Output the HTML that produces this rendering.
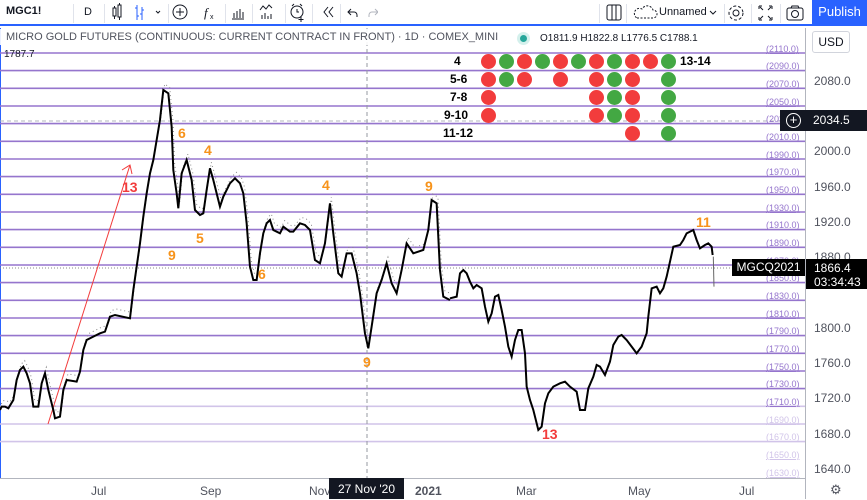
<!DOCTYPE html>
<html><head><meta charset="utf-8"><style>
*{margin:0;padding:0;box-sizing:border-box}
body{width:867px;height:499px;overflow:hidden;background:#fff;font-family:"Liberation Sans",sans-serif;position:relative;color:#131722}
.tb{position:absolute;left:0;top:0;width:867px;height:26px;background:#fff;border-bottom:2px solid #2962ff}
.t{position:absolute;font-size:12px;color:#131722}
.sep{position:absolute;top:4px;width:1px;height:19px;background:#e0e3eb}
.pub{position:absolute;left:812px;top:0;width:55px;height:26px;background:#2962ff;color:#fff;font-size:13px;line-height:24px;text-align:center}
.pa{position:absolute;font-size:12px;color:#50535e;left:814px}
.lab{position:absolute;font-size:9px;color:#9575cd;left:766px;text-decoration:underline}
.lt{color:#d1c4e9}
.on{position:absolute;font-weight:bold;font-size:14px;color:#f7931a}
.b{position:absolute;font-weight:bold;font-size:12px;color:#000}
.d{position:absolute;width:15px;height:15px;border-radius:50%}
.r{background:#f23c3c}.g{background:#43a843}
</style></head><body>
<div class="tb">
<div class="t" style="left:6px;top:5px;font-weight:bold;font-size:11px">MGC1!</div>
<div class="sep" style="left:73px"></div>
<div class="t" style="left:84px;top:6px;font-size:11px">D</div>
<div class="sep" style="left:104px"></div>
<svg style="position:absolute;left:108px;top:2px" width="270" height="22" fill="none" stroke="#131722" stroke-width="1">
<rect x="5" y="6" width="3" height="8"/><rect x="10" y="3" width="3" height="12"/><path d="M6.5 4v2M6.5 14v3M11.5 1v2M11.5 15v3"/>
<path d="M29 3v15M34 5v13M27 6h2M29 14h2M34 8h2M32 12h2" stroke="#2962ff"/>
<path d="M48 9l2 2 2-2"/>
<circle cx="72" cy="10" r="7"/><path d="M72 6v8M68 10h8"/>
<text x="96" y="15" font-size="13" font-style="italic" fill="#131722" stroke="none" font-family="Liberation Serif">f</text><text x="102" y="17" font-size="7" fill="#131722" stroke="none">x</text>
<path d="M124 17h12M126 16v-5M129 16v-7M132 16v-9M135 16v-6"/>
<path d="M152 8l3-4 3 3 3-4 3 3M154 17v-4M157 17v-6M160 17v-3M163 17v-5"/>
<circle cx="189" cy="10" r="6"/><path d="M189 7v3h2M184 4l2-2M194 4l-2-2M193 15v5M190.5 17.5h5"/>
<path d="M220 5l-4 5 4 5M225 5l-4 5 4 5"/>
<path d="M243 7l-3 3 3 3M240 10h6a3 3 0 0 1 3 3v2"/>
<path d="M267 7l3 3-3 3M270 10h-6a3 3 0 0 0-3 3v2" stroke="#b2b5be"/>
</svg>
<div class="sep" style="left:168px"></div><div class="sep" style="left:225px"></div><div class="sep" style="left:252px"></div><div class="sep" style="left:285px"></div><div class="sep" style="left:312px"></div><div class="sep" style="left:340px"></div>
<div class="sep" style="left:599px"></div><div class="sep" style="left:626px"></div><div class="sep" style="left:724px"></div><div class="sep" style="left:751px"></div><div class="sep" style="left:780px"></div>
<svg style="position:absolute;left:600px;top:2px" width="210" height="22" fill="none" stroke="#131722" stroke-width="1">
<rect x="7" y="3" width="14" height="15" rx="2"/><path d="M12 3v15M16 3v15"/>
<path d="M37 16h16a4 4 0 0 0 0-8 6 6 0 0 0-11-1 4 4 0 0 0-5 9z" stroke-dasharray="2 1.5"/>
<path d="M110 9l3 3 3-3"/>
<circle cx="136" cy="11" r="3"/><circle cx="136" cy="11" r="7" stroke-dasharray="3 2"/>
<path d="M159 4h3M159 4v3M172 4h-3M172 4v3M159 18h3M159 18v-3M172 18h-3M172 18v-3M160 5l3 3M171 5l-3 3M160 17l3-3M171 17l-3-3"/>
<rect x="187" y="6" width="16" height="12" rx="2"/><circle cx="195" cy="12" r="3.5"/><path d="M191 6l1-2h6l1 2"/>
</svg>
<div class="t" style="left:659px;top:6px;font-size:11px">Unnamed</div>
<div class="pub">Publish</div>
</div>
<div style="position:absolute;left:0;top:28px;width:1px;height:450px;background:#2962ff"></div>
<div style="position:absolute;left:805px;top:28px;width:1px;height:471px;background:#b2b5be"></div>
<div style="position:absolute;left:0;top:478px;width:805px;height:1px;background:#b2b5be"></div>
<svg style="position:absolute;left:0;top:28px" width="805" height="450">
<g stroke-width="1.6">
<line x1="0" x2="805" y1="25" y2="25" stroke="#9575cd"/><line x1="0" x2="805" y1="42.6" y2="42.6" stroke="#9575cd"/><line x1="0" x2="805" y1="60.3" y2="60.3" stroke="#9575cd"/><line x1="0" x2="805" y1="78" y2="78" stroke="#9575cd"/><line x1="0" x2="805" y1="95.6" y2="95.6" stroke="#9575cd"/><line x1="0" x2="805" y1="113.3" y2="113.3" stroke="#9575cd"/><line x1="0" x2="805" y1="131" y2="131" stroke="#9575cd"/><line x1="0" x2="805" y1="148.6" y2="148.6" stroke="#9575cd"/><line x1="0" x2="805" y1="166.3" y2="166.3" stroke="#9575cd"/><line x1="0" x2="805" y1="184" y2="184" stroke="#9575cd"/><line x1="0" x2="805" y1="201.6" y2="201.6" stroke="#9575cd"/><line x1="0" x2="805" y1="219.3" y2="219.3" stroke="#9575cd"/><line x1="0" x2="805" y1="237" y2="237" stroke="#9575cd"/><line x1="0" x2="805" y1="254.6" y2="254.6" stroke="#9575cd"/><line x1="0" x2="805" y1="272.3" y2="272.3" stroke="#9575cd"/><line x1="0" x2="805" y1="290" y2="290" stroke="#9575cd"/><line x1="0" x2="805" y1="307.6" y2="307.6" stroke="#9575cd"/><line x1="0" x2="805" y1="325.3" y2="325.3" stroke="#9575cd"/><line x1="0" x2="805" y1="343" y2="343" stroke="#9575cd"/><line x1="0" x2="805" y1="360.6" y2="360.6" stroke="#9575cd"/><line x1="0" x2="805" y1="378.3" y2="378.3" stroke="#d1c4e9"/><line x1="0" x2="805" y1="396" y2="396" stroke="#d1c4e9"/><line x1="0" x2="805" y1="413.6" y2="413.6" stroke="#d1c4e9"/>
</g>
<line x1="367" x2="367" y1="0" y2="450" stroke="#9598a1" stroke-dasharray="4 3"/>
<line x1="0" x2="805" y1="93" y2="93" stroke="#b2b5be" stroke-dasharray="4 3"/>
<line x1="0" x2="730" y1="240" y2="240" stroke="#888" stroke-dasharray="1 2"/>
<line x1="48" y1="396" x2="130" y2="137" stroke="#f23c3c"/>
<path d="M122 142l8-5 2 9" stroke="#f23c3c" fill="none"/>
<g transform="translate(0,32) scale(0.3333)" fill="none" stroke-linejoin="miter">
<path d="M0 1050L5 1040L15 1040L25 1045L40 1020L50 960L60 930L70 920L80 940L90 970L100 1040L115 1040L125 970L135 940L145 990L160 1050L165 1075L180 1070L190 990L200 960L230 965L240 935L250 870L260 840L280 830L300 820L315 815L330 770L345 765L390 775L400 690L410 620L420 550L430 470L440 400L450 340L460 300L470 240L480 180L490 90L505 100L515 200L520 330L530 400L535 445L545 340L560 300L575 360L585 450L600 465L610 460L620 390L630 325L640 360L650 400L660 440L670 410L690 370L705 355L720 370L730 400L740 490L750 620L760 660L770 660L780 580L790 520L800 490L810 480L820 510L840 520L850 500L870 515L880 515L900 490L915 495L930 510L945 600L960 610L975 550L990 430L1000 520L1015 640L1025 650L1040 580L1055 580L1070 640L1080 700L1095 820L1105 865L1115 800L1130 700L1145 660L1160 610L1175 670L1190 700L1205 630L1220 550L1240 580L1270 570L1285 510L1295 420L1310 430L1320 630L1330 710L1350 720" stroke="#888" stroke-width="3" stroke-dasharray="3 9" transform="translate(4,-18)"/>
<path d="M0 1050L5 1040L15 1040L25 1045L40 1020L50 960L60 930L70 920L80 940L90 970L100 1040L115 1040L125 970L135 940L145 990L160 1050L165 1075L180 1070L190 990L200 960L230 965L240 935L250 870L260 840L280 830L300 820L315 815L330 770L345 765L390 775L400 690L410 620L420 550L430 470L440 400L450 340L460 300L470 240L480 180L490 90L505 100L515 200L520 330L530 400L535 445L545 340L560 300L575 360L585 450L600 465L610 460L620 390L630 325L640 360L650 400L660 440L670 410L690 370L705 355L720 370L730 400L740 490L750 620L760 660L770 660L780 580L790 520L800 490L810 480L820 510L840 520L850 500L870 515L880 515L900 490L915 495L930 510L945 600L960 610L975 550L990 430L1000 520L1015 640L1025 650L1040 580L1055 580L1070 640L1080 700L1095 820L1105 865L1115 800L1130 700L1145 660L1160 610L1175 670L1190 700L1205 630L1220 550L1240 580L1270 570L1285 510L1295 420L1310 430L1320 630L1330 710L1350 720" stroke="#000" stroke-width="6"/>
</g>
<g transform="translate(440,172) scale(0.3333)" fill="none" stroke="#000" stroke-width="6">
<path d="M30 295L50 290L60 220L70 210L80 220L90 245L100 265L110 255L125 265L135 320L145 365L155 340L165 290L175 285L185 330L195 380L205 440L215 470L225 420L235 390L245 390L255 460L260 560L270 600L280 630L295 690L305 680L315 610L325 580L340 560L360 550L375 545L390 560L410 575L420 630L435 630L445 565L460 530L470 495L480 500L495 525L510 485L520 435L535 410L545 405L560 420L575 440L590 460L605 440L620 400L625 350L635 265L650 260L660 280L670 265L680 230L690 185L700 140L720 135L730 120L740 100L760 90L770 120L780 145L795 135L805 130L815 140L818 165"/>
<path d="M820 170L822 260" stroke="#666" stroke-width="3"/>
</g>
</svg>
<div class="lab" style="top:44px">(2110.0)</div><div class="lab" style="top:61px">(2090.0)</div><div class="lab" style="top:79px">(2070.0)</div><div class="lab" style="top:97px">(2050.0)</div><div class="lab" style="top:114px">(203</div><div class="lab" style="top:132px">(2010.0)</div><div class="lab" style="top:150px">(1990.0)</div><div class="lab" style="top:167px">(1970.0)</div><div class="lab" style="top:185px">(1950.0)</div><div class="lab" style="top:203px">(1930.0)</div><div class="lab" style="top:220px">(1910.0)</div><div class="lab" style="top:238px">(1890.0)</div><div class="lab" style="top:256px">(1870.0)</div><div class="lab" style="top:273px">(1850.0)</div><div class="lab" style="top:291px">(1830.0)</div><div class="lab" style="top:309px">(1810.0)</div><div class="lab" style="top:326px">(1790.0)</div><div class="lab" style="top:344px">(1770.0)</div><div class="lab" style="top:362px">(1750.0)</div><div class="lab" style="top:379px">(1730.0)</div><div class="lab" style="top:397px">(1710.0)</div><div class="lab lt" style="top:415px">(1690.0)</div><div class="lab lt" style="top:432px">(1670.0)</div><div class="lab lt" style="top:450px">(1650.0)</div><div class="lab lt" style="top:468px">(1630.0)</div>
<div style="position:absolute;left:0;top:29px;width:805px;height:16px;background:rgba(255,255,255,.9)"></div>
<div class="t" style="left:6px;top:31px;font-size:11px;color:#50535e">MICRO GOLD FUTURES (CONTINUOUS: CURRENT CONTRACT IN FRONT) · 1D · COMEX_MINI</div>
<div style="position:absolute;left:520px;top:35px;width:7px;height:7px;border-radius:50%;background:#26a69a;box-shadow:0 0 0 3px #d4f0ec"></div>
<div class="t" style="left:540px;top:33px;font-size:10px">O1811.9 H1822.8 L1776.5 C1788.1</div>
<div class="t" style="left:4px;top:49px;font-size:10px">1787.7</div>
<div style="position:absolute;left:812px;top:31px;width:38px;height:22px;border:1px solid #d1d4dc;border-radius:3px;font-size:12px;text-align:center;line-height:20px">USD</div>
<div class="pa" style="top:74px">2080.0</div><div class="pa" style="top:144px">2000.0</div><div class="pa" style="top:180px">1960.0</div><div class="pa" style="top:215px">1920.0</div><div class="pa" style="top:250px">1880.0</div><div class="pa" style="top:321px">1800.0</div><div class="pa" style="top:356px">1760.0</div><div class="pa" style="top:391px">1720.0</div><div class="pa" style="top:427px">1680.0</div><div class="pa" style="top:462px">1640.0</div>
<div style="position:absolute;left:780px;top:110px;width:87px;height:21px;background:#131722;color:#fff;font-size:12px;line-height:21px;padding-left:33px">2034.5</div>
<div style="position:absolute;left:786px;top:113px;width:15px;height:15px;border:1px solid #fff;border-radius:50%;color:#fff;font-size:13px;line-height:12px;text-align:center">+</div>
<div style="position:absolute;left:732px;top:259px;width:73px;height:17px;background:#000;color:#fff;font-size:12px;line-height:17px;text-align:center">MGCQ2021</div>
<div style="position:absolute;left:806px;top:259px;width:61px;height:30px;background:#000;color:#fff;font-size:12px;line-height:14px;padding:2px 0 0 8px">1866.4<br>03:34:43</div>
<div class="b" style="left:454px;top:54px">4</div><div class="b" style="left:680px;top:54px">13-14</div>
<div class="b" style="left:450px;top:72px">5-6</div><div class="b" style="left:450px;top:90px">7-8</div><div class="b" style="left:444px;top:108px">9-10</div><div class="b" style="left:443px;top:126px">11-12</div>
<div class="d r" style="left:481px;top:54px"></div><div class="d g" style="left:499px;top:54px"></div><div class="d r" style="left:517px;top:54px"></div><div class="d g" style="left:535px;top:54px"></div><div class="d r" style="left:553px;top:54px"></div><div class="d g" style="left:571px;top:54px"></div><div class="d r" style="left:589px;top:54px"></div><div class="d g" style="left:607px;top:54px"></div><div class="d r" style="left:625px;top:54px"></div><div class="d r" style="left:643px;top:54px"></div><div class="d g" style="left:661px;top:54px"></div>
<div class="d r" style="left:481px;top:72px"></div><div class="d g" style="left:499px;top:72px"></div><div class="d r" style="left:517px;top:72px"></div><div class="d r" style="left:553px;top:72px"></div><div class="d r" style="left:589px;top:72px"></div><div class="d g" style="left:607px;top:72px"></div><div class="d r" style="left:625px;top:72px"></div><div class="d g" style="left:661px;top:72px"></div>
<div class="d r" style="left:481px;top:90px"></div><div class="d r" style="left:589px;top:90px"></div><div class="d g" style="left:607px;top:90px"></div><div class="d r" style="left:625px;top:90px"></div><div class="d g" style="left:661px;top:90px"></div>
<div class="d r" style="left:481px;top:108px"></div><div class="d r" style="left:589px;top:108px"></div><div class="d g" style="left:607px;top:108px"></div><div class="d r" style="left:625px;top:108px"></div><div class="d g" style="left:661px;top:108px"></div>
<div class="d r" style="left:625px;top:126px"></div><div class="d g" style="left:661px;top:126px"></div>
<div class="on" style="left:122px;top:179px;color:#f23c3c">13</div>
<div class="on" style="left:178px;top:125px">6</div><div class="on" style="left:204px;top:142px">4</div><div class="on" style="left:196px;top:230px">5</div><div class="on" style="left:168px;top:247px">9</div><div class="on" style="left:258px;top:266px">6</div><div class="on" style="left:322px;top:177px">4</div><div class="on" style="left:363px;top:354px">9</div><div class="on" style="left:425px;top:178px">9</div><div class="on" style="left:696px;top:214px">11</div><div class="on" style="left:542px;top:426px;color:#f23c3c">13</div>
<div class="t" style="left:91px;top:484px;color:#50535e">Jul</div><div class="t" style="left:200px;top:484px;color:#50535e">Sep</div><div class="t" style="left:309px;top:484px;color:#50535e">Nov</div><div class="t" style="left:415px;top:484px;color:#50535e;font-weight:bold">2021</div><div class="t" style="left:516px;top:484px;color:#50535e">Mar</div><div class="t" style="left:628px;top:484px;color:#50535e">May</div><div class="t" style="left:739px;top:484px;color:#50535e">Jul</div>
<div style="position:absolute;left:329px;top:478px;width:75px;height:21px;background:#131722;color:#fff;font-size:12px;line-height:22px;text-align:center">27 Nov '20</div>
<div class="t" style="left:830px;top:482px;font-size:13px;color:#50535e">⚙</div>
</body></html>
